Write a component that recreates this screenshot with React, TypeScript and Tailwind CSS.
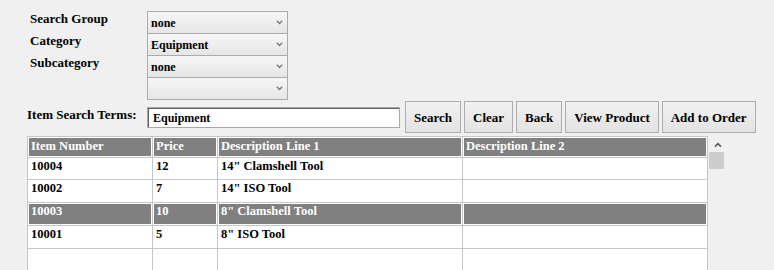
import React from "react";

interface Item {
  id: string;
  price: string;
  desc1: string;
  desc2: string;
  selected?: boolean;
}

const filters = [
  { label: "Search Group", value: "none" },
  { label: "Category", value: "Equipment" },
  { label: "Subcategory", value: "none" },
  { label: "", value: "" },
];

const items: Item[] = [
  { id: "10004", price: "12", desc1: '14" Clamshell Tool', desc2: "" },
  { id: "10002", price: "7", desc1: '14" ISO Tool', desc2: "" },
  { id: "10003", price: "10", desc1: '8" Clamshell Tool', desc2: "", selected: true },
  { id: "10001", price: "5", desc1: '8" ISO Tool', desc2: "" },
  { id: "", price: "", desc1: "", desc2: "" },
];

const buttons = ["Search", "Clear", "Back", "View Product", "Add to Order"];

const colClasses = ["w-[125px]", "w-[65px]", "w-[245px]", "w-[245px]"];

const Chevron: React.FC = () => (
  <svg width="7" height="5" viewBox="0 0 7 5">
    <path d="M0.8 0.8L3.5 3.6L6.2 0.8" stroke="#7a7a7a" strokeWidth="1.4" fill="none" />
  </svg>
);

const Cell: React.FC<{ index: number; text: string; dark: boolean; header?: boolean }> = ({
  index,
  text,
  dark,
  header = false,
}) => (
  <div className={`${colClasses[index]} h-full border-r border-[#c6c6c6] p-px`}>
    <div
      className={`h-full pl-[2px] leading-[14px] whitespace-nowrap overflow-hidden ${
        header ? "pt-px" : ""
      } ${dark ? "bg-[#808080] text-white" : "text-black"}`}
    >
      {text}
    </div>
  </div>
);

const App: React.FC = () => {
  return (
    <div className="w-[774px] h-[270px] overflow-hidden bg-[#f0f0f0] font-['Liberation_Serif',serif] font-bold text-black">
      <div className="flex pt-[11px]">
        <div className="w-[147px] pl-[30px] text-[13px]">
          {filters.map((f, i) => (
            <div key={i} className="h-[22px] leading-[15px]">
              {f.label}
            </div>
          ))}
        </div>
        <div className="w-[141px] flex flex-col">
          {filters.map((f, i) => (
            <div
              key={i}
              className={`h-[23px] ${i > 0 ? "-mt-px" : ""} border border-[#ababab] bg-gradient-to-b from-[#f6f6f6] to-[#e6e6e6] flex items-center justify-between pl-[3px] pr-[4px] text-[12px]`}
            >
              <span>{f.value}</span>
              <Chevron />
            </div>
          ))}
        </div>
      </div>

      <div className="flex items-start pl-[27px] mt-px">
        <div className="w-[120px] mt-[6px] leading-[15px] text-[13px]">Item Search Terms:</div>
        <div className="w-[253px] h-[21px] mt-[6px] border border-[#a8a8a8] bg-white shadow-[inset_1px_1px_0_#606060] flex items-center pl-[5px] text-[12px]">
          Equipment
        </div>
        <div className="flex gap-[3px] ml-[5px]">
          {buttons.map((b) => (
            <button
              key={b}
              className="h-[32px] px-[8px] border border-[#adadad] bg-gradient-to-b from-[#f2f2f2] to-[#e3e3e3] text-[13px] font-bold leading-[15px]"
            >
              {b}
            </button>
          ))}
        </div>
      </div>

      <div className="flex pl-[27px] mt-[3px]">
        <div className="border-l border-t border-[#c6c6c6] bg-white text-[12.5px]">
          <div className="flex h-[21px] border-b border-[#c6c6c6]">
            {["Item Number", "Price", "Description Line 1", "Description Line 2"].map((h, i) => (
              <Cell key={h} index={i} text={h} dark header />
            ))}
          </div>
          {items.map((it, r) => (
            <div
              key={r}
              className={`flex ${r === 0 ? "h-[22px]" : "h-[23px]"} border-b border-[#c6c6c6]`}
            >
              {[it.id, it.price, it.desc1, it.desc2].map((t, i) => (
                <Cell key={i} index={i} text={t} dark={!!it.selected} />
              ))}
            </div>
          ))}
        </div>
        <div className="w-[17px] flex flex-col items-center">
          <svg width="8" height="6" viewBox="0 0 8 6" className="mt-[6px] ml-[2px]">
            <path d="M1 4.6L4 1.6L7 4.6" stroke="#5a5a5a" strokeWidth="1.6" fill="none" />
          </svg>
          <div className="w-[15px] h-[17px] mt-[4px] bg-[#cdcdcd]" />
        </div>
      </div>
    </div>
  );
};

export default App;
